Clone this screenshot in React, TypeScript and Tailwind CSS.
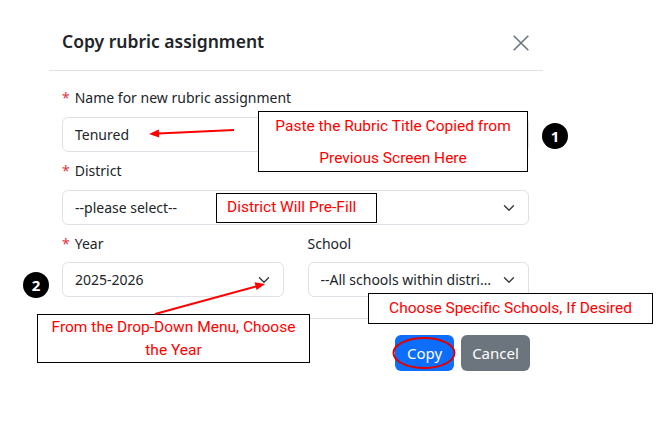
import React from "react";

function Chevron() {
  return (
    <svg width="12" height="12" viewBox="0 0 16 16" className="shrink-0 text-[#343a40]">
      <path d="M2 5l6 6 6-6" fill="none" stroke="currentColor" strokeWidth="1.8" strokeLinecap="round" strokeLinejoin="round" />
    </svg>
  );
}

function Label({ text, required }: { text: string; required?: boolean }) {
  return (
    <div className="h-[21px] leading-[21px] text-[14px] text-[#212529]">
      {required && <span className="text-[#dc3545] mr-[5px]">*</span>}
      {text}
    </div>
  );
}

function Select({ value }: { value: string }) {
  return (
    <div className="flex h-[35px] items-center gap-2 rounded-[6px] border border-[#dee2e6] pl-[12px] pr-[13px] text-[14px] text-[#212529]">
      <span className="flex-1 truncate">{value}</span>
      <Chevron />
    </div>
  );
}

function Callout({ children, className }: { children: React.ReactNode; className: string }) {
  return (
    <div
      className={`absolute flex flex-col items-center justify-center border border-black bg-white text-center text-[15.5px] text-[#ff0000] ${className}`}
      style={{ fontFamily: "Roboto, 'Liberation Sans', sans-serif" }}
    >
      {children}
    </div>
  );
}

function Badge({ n, className }: { n: string; className: string }) {
  return (
    <div className={`absolute flex h-[26px] w-[26px] items-center justify-center rounded-full bg-black text-[15px] font-bold text-white ${className}`}>
      {n}
    </div>
  );
}

export default function App() {
  return (
    <div
      className="relative h-[439px] w-[668px] overflow-hidden bg-white"
      style={{ fontFamily: "'Noto Sans', 'Open Sans', sans-serif" }}
    >
      <div className="ml-[49px] w-[494px]">
        {/* header */}
        <div className="flex h-[71px] items-start justify-between border-b border-[#dee2e6] pl-[13px] pr-[13px] pt-[28px]">
          <h2 className="text-[17.5px] font-semibold leading-[27px] text-[#212529]">Copy rubric assignment</h2>
          <svg width="18" height="18" viewBox="0 0 16 16" className="mt-[6px] text-[#6c757d]">
            <path d="M1.5 1.5l13 13M14.5 1.5l-13 13" stroke="currentColor" strokeWidth="1.4" />
          </svg>
        </div>

        {/* body */}
        <div className="flex flex-col border-b border-[#dee2e6] pl-[13px] pr-[14px] pt-[16px] pb-[21px]">
          <Label text="Name for new rubric assignment" required />
          <div className="mt-[9px] flex h-[35px] items-center rounded-[6px] border border-[#dee2e6] px-[12px] text-[14px] text-[#212529]">
            Tenured
          </div>
          <div className="mt-[8px]">
            <Label text="District" required />
          </div>
          <div className="mt-[9px]">
            <Select value="--please select--" />
          </div>
          <div className="mt-[8px] grid grid-cols-2 gap-x-[24px]">
            <div className="flex flex-col">
              <Label text="Year" required />
              <div className="mt-[8px]">
                <Select value="2025-2026" />
              </div>
            </div>
            <div className="flex flex-col">
              <Label text="School" />
              <div className="mt-[8px]">
                <Select value="--All schools within district--" />
              </div>
            </div>
          </div>
        </div>

        {/* footer */}
        <div className="flex justify-end gap-[7px] pr-[13px] pt-[16px]">
          <button className="h-[36px] w-[59px] rounded-[6px] bg-[#0d6efd] text-[15px] text-white">Copy</button>
          <button className="h-[36px] w-[69px] rounded-[6px] bg-[#6c757d] text-[15px] text-white">Cancel</button>
        </div>
      </div>

      {/* annotations */}
      <Callout className="left-[258px] top-[111px] h-[61px] w-[270px] leading-[32px]">
        <span>Paste the Rubric Title Copied from</span>
        <span>Previous Screen Here</span>
      </Callout>
      <Callout className="left-[216px] top-[193px] h-[30px] w-[161px] !items-start pl-[10px]">
        <span>District Will Pre-Fill</span>
      </Callout>
      <Callout className="left-[368px] top-[293px] h-[31px] w-[285px]">
        <span>Choose Specific Schools, If Desired</span>
      </Callout>
      <Callout className="left-[37px] top-[314px] h-[49px] w-[273px] leading-[23px]">
        <span>From the Drop-Down Menu, Choose</span>
        <span>the Year</span>
      </Callout>

      <Badge n="1" className="left-[542px] top-[123px]" />
      <Badge n="2" className="left-[23px] top-[272px]" />

      <svg width="668" height="439" className="pointer-events-none absolute left-0 top-0">
        <line x1="234" y1="130" x2="158" y2="133.6" stroke="#ff0000" strokeWidth="2" />
        <polygon points="149,134 159.2,137.5 158.8,129.5" fill="#ff0000" />
        <line x1="155" y1="314" x2="256" y2="286.4" stroke="#ff0000" strokeWidth="2" />
        <polygon points="265,284 254.5,282.2 256.6,290.1" fill="#ff0000" />
        <ellipse cx="424" cy="353" rx="30.5" ry="15" fill="none" stroke="#e00000" strokeWidth="2" />
      </svg>
    </div>
  );
}
